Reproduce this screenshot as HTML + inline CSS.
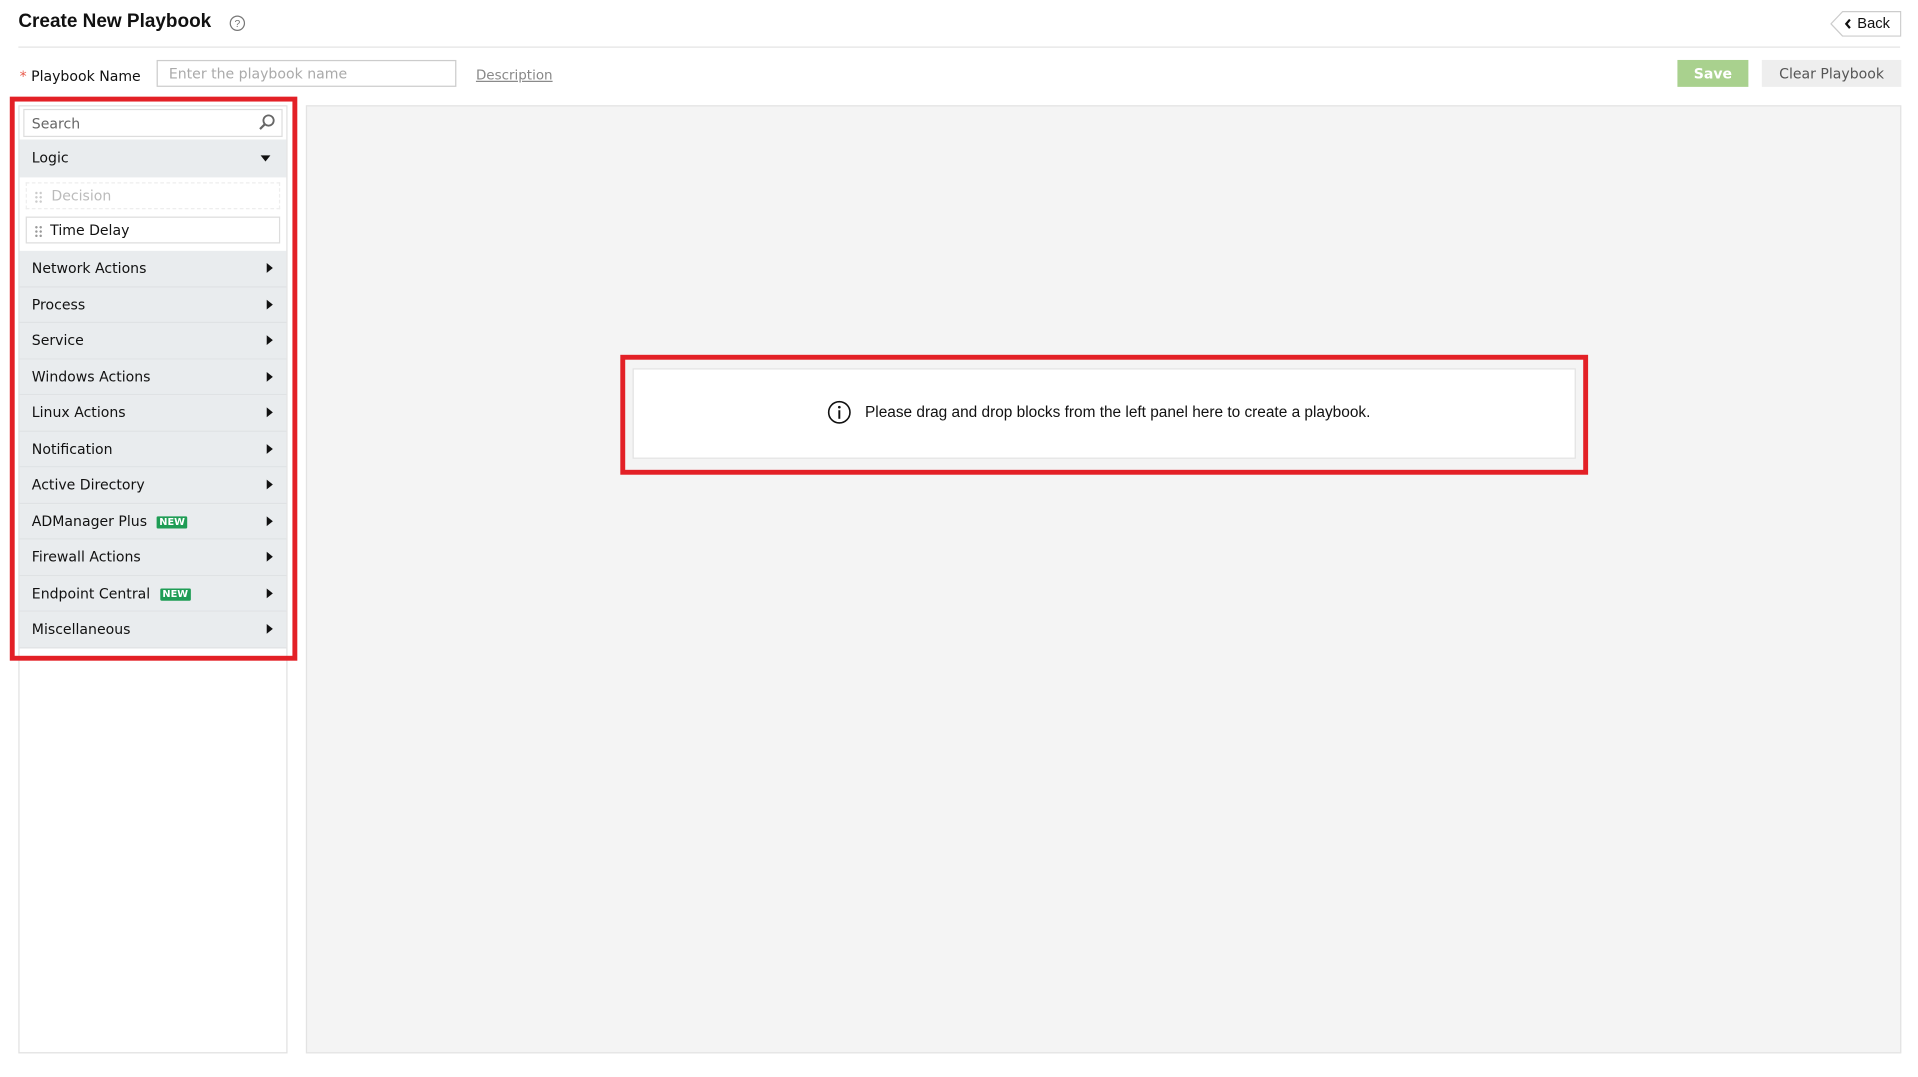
<!DOCTYPE html>
<html><head><meta charset="utf-8"><style>
html,body{margin:0;padding:0;background:#fff;overflow:hidden}
body{width:1918px;height:1077px}
#w{position:absolute;left:0;top:0;width:1570px;height:880px;transform:scale(1.2235);transform-origin:0 0;font-family:"DejaVu Sans","Liberation Sans",sans-serif;font-size:11.5px;color:#111}
.a{position:absolute}
.row{position:absolute;left:16px;width:218px;height:28.5px;background:#e9ecee;border-bottom:1px solid #dfe2e4;line-height:28px}
.row span.t{position:absolute;left:10px;top:0}
.tri{position:absolute;right:11px;top:10px;width:0;height:0;border-top:4px solid transparent;border-bottom:4px solid transparent;border-left:5px solid #111}
.new{display:inline-block;background:#1f9d55;color:#fff;font-size:8px;font-weight:bold;line-height:10px;padding:0 2px;margin-left:8px;vertical-align:1px;border-radius:1px}
.red{position:absolute;border:4px solid #e32026;box-sizing:border-box}
.dots{position:absolute;left:6px;top:6px;width:7px;height:11px;background:radial-gradient(circle,#999 0.9px,transparent 1.1px) 0 0/3.5px 3.5px}
</style></head><body><div id="w">
<div class="a" style="left:15px;top:9px;font-family:'Liberation Sans',sans-serif;font-weight:bold;font-size:15.5px">Create New Playbook</div>
<svg class="a" style="left:187px;top:12px" width="14" height="14" viewBox="0 0 14 14"><circle cx="7" cy="7" r="5.8" fill="none" stroke="#777" stroke-width="1"/><text x="7" y="10.2" font-size="8.5" text-anchor="middle" fill="#777" font-family="Liberation Sans">?</text></svg>
<svg class="a" style="left:1496px;top:9px" width="58" height="21" viewBox="0 0 58 21"><path d="M57.5 0.5H10L0.5 10.5 10 20.5H57.5Z" fill="#fff" stroke="#ccc"/><path d="M16 7l-3 3.5 3 3.5" fill="none" stroke="#111" stroke-width="1.8"/></svg>
<div class="a" style="left:1518px;top:12px;font-size:12px;font-family:'Liberation Sans',sans-serif">Back</div>
<div class="a" style="left:15px;top:38px;width:1538px;height:1px;background:#e3e3e3"></div>
<div class="a" style="left:16px;top:55px"><span style="color:#e8594a">*</span> Playbook Name</div>
<div class="a" style="left:128px;top:49px;width:245px;height:22px;border:1px solid #ccc;box-sizing:border-box;color:#aaa;padding:3px 0 0 9px">Enter the playbook name</div>
<div class="a" style="left:389px;top:55px;color:#888;text-decoration:underline;font-size:11px">Description</div>
<div class="a" style="left:1371px;top:49px;width:58px;height:22px;background:#a9d18e;color:#fff;font-weight:bold;text-align:center;line-height:22px;font-size:11.5px">Save</div>
<div class="a" style="left:1440px;top:49px;width:114px;height:22px;background:#eeeeee;color:#555;text-align:center;line-height:22px">Clear Playbook</div>
<div class="a" style="left:15px;top:86px;width:220px;height:775px;border:1px solid #e0e0e0;box-sizing:border-box"></div>
<div class="a" style="left:250px;top:86px;width:1304px;height:775px;border:1px solid #e3e3e3;box-sizing:border-box;background:#f4f4f4"></div>
<div class="a" style="left:19px;top:89px;width:212px;height:23px;border:1px solid #ddd;box-sizing:border-box;color:#666;padding:4px 0 0 6px">Search</div>
<svg class="a" style="left:210px;top:92px" width="16" height="16" viewBox="0 0 16 16"><circle cx="9.5" cy="6.5" r="4.2" fill="none" stroke="#666" stroke-width="1.5"/><path d="M6.5 9.5L2.5 13.5" stroke="#666" stroke-width="1.8"/></svg>
<div class="row" style="top:114px;height:31px;line-height:30px;border-bottom:none"><span class="t">Logic</span><div style="position:absolute;right:13px;top:13px;border-left:4.5px solid transparent;border-right:4.5px solid transparent;border-top:5px solid #111"></div></div>
<div class="a" style="left:21px;top:149px;width:208px;height:22px;border:1px dashed #eee;box-sizing:border-box;color:#bbb;line-height:20px"><div class="dots" style="opacity:.5"></div><span style="position:absolute;left:20px">Decision</span></div>
<div class="a" style="left:21px;top:177px;width:208px;height:22px;border:1px solid #ddd;box-sizing:border-box;line-height:20px"><div class="dots"></div><span style="position:absolute;left:19px">Time Delay</span></div>
<div class="row" style="top:205px"><span class="t">Network Actions</span><div class="tri"></div></div>
<div class="row" style="top:234.5px"><span class="t">Process</span><div class="tri"></div></div>
<div class="row" style="top:264px"><span class="t">Service</span><div class="tri"></div></div>
<div class="row" style="top:293.5px"><span class="t">Windows Actions</span><div class="tri"></div></div>
<div class="row" style="top:323px"><span class="t">Linux Actions</span><div class="tri"></div></div>
<div class="row" style="top:352.5px"><span class="t">Notification</span><div class="tri"></div></div>
<div class="row" style="top:382px"><span class="t">Active Directory</span><div class="tri"></div></div>
<div class="row" style="top:411.5px"><span class="t">ADManager Plus<span class="new">NEW</span></span><div class="tri"></div></div>
<div class="row" style="top:441px"><span class="t">Firewall Actions</span><div class="tri"></div></div>
<div class="row" style="top:470.5px"><span class="t">Endpoint Central<span class="new">NEW</span></span><div class="tri"></div></div>
<div class="row" style="top:500px"><span class="t">Miscellaneous</span><div class="tri"></div></div>
<div class="red" style="left:8px;top:79px;width:235px;height:461px"></div>
<div class="red" style="left:507px;top:290px;width:791px;height:98px"></div>
<div class="a" style="left:517px;top:301px;width:771px;height:74px;background:#fff;border:1px solid #e2e2e2;box-sizing:border-box"></div>
<svg class="a" style="left:676px;top:327px" width="20" height="20" viewBox="0 0 20 20"><circle cx="10" cy="10" r="8.7" fill="none" stroke="#111" stroke-width="1.3"/><circle cx="10" cy="5.8" r="1.1" fill="#111"/><rect x="9.2" y="8.3" width="1.6" height="7" fill="#111"/></svg>
<div class="a" style="left:707px;top:330px;font-family:'Liberation Sans',sans-serif;font-size:12.6px">Please drag and drop blocks from the left panel here to create a playbook.</div>
</div></body></html>
